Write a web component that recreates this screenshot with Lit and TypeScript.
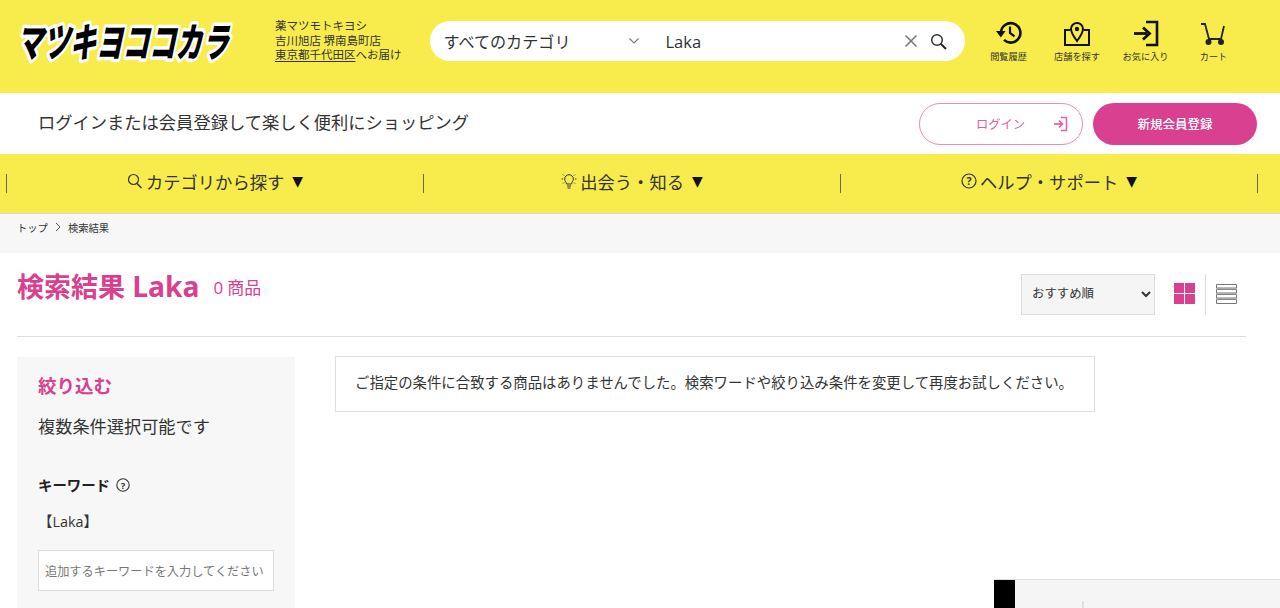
import { LitElement, html, css } from "lit";
import { customElement } from "lit/decorators.js";

@customElement("app-root")
export class AppRoot extends LitElement {
  static styles = css`
    :host {
      display: block;
      position: relative;
      width: 1280px;
      height: 608px;
      overflow: hidden;
      background: #fff;
      color: #333;
      font-family: "Noto Sans CJK JP", "Noto Sans", sans-serif;
    }
    svg { display: block; flex: none; }
    .latin { font-family: "Open Sans", "Noto Sans", "Noto Sans CJK JP", sans-serif; }

    .top {
      height: 93px;
      background: #f8ec4c;
      display: flex;
      align-items: flex-start;
      box-sizing: border-box;
      padding: 16px 0 0 16px;
    }
    .logo { width: 220px; height: 52px; overflow: visible; }
    .logo text {
      font-family: "Noto Sans CJK JP", sans-serif;
      font-weight: 900;
      font-size: 40px;
      fill: #000;
      stroke: #fff;
      stroke-width: 7px;
      stroke-linejoin: round;
      paint-order: stroke;
    }
    .addr {
      margin: 2px 0 0 39px;
      font-size: 11.5px;
      line-height: 14.5px;
      color: #333;
      white-space: nowrap;
    }
    .addr u { text-underline-offset: 2px; }
    .search {
      margin: 5px 0 0 28px;
      width: 535px;
      height: 40px;
      border-radius: 20px;
      background: #fff;
      display: flex;
      align-items: center;
      box-sizing: border-box;
      padding-left: 14px;
      font-size: 16px;
    }
    .cat { width: 222px; flex: none; display: flex; align-items: center; font-size: 16.1px; }
    .chev { margin-left: 58px; }
    .search .kw { flex: 1; color: #333; font-size: 16.5px; }
    .search .x { margin-right: 12px; }
    .search .s { margin-right: 18px; }
    .icons {
      margin: 2px 0 0 10px;
      display: grid;
      grid-template-columns: 68px 69px 68px 68px;
    }
    .ic {
      display: flex;
      flex-direction: column;
      align-items: center;
      font-size: 9.2px;
      line-height: 12px;
      color: #333;
      white-space: nowrap;
    }
    .ic svg { height: 28px; margin-top: 2px; margin-bottom: 2px; }

    .login {
      height: 61px;
      display: flex;
      align-items: center;
      box-sizing: border-box;
      padding: 0 23px 0 38px;
      font-size: 17.28px;
      color: #333;
    }
    .login .msg { flex: 1; white-space: nowrap; margin-top: -4px; }
    .btn {
      width: 164px;
      height: 42px;
      border-radius: 21px;
      box-sizing: border-box;
      display: flex;
      align-items: center;
      justify-content: center;
      position: relative;
      font-size: 12.3px;
    }
    .btn.out {
      border: 1px solid #ea8dbc;
      color: #e0609f;
      margin-right: 10px;
      padding-right: 1px;
    }
    .btn.out svg { position: absolute; right: 14px; top: 12px; }
    .btn.fill { background: #d9408f; color: #fff; font-size: 12.5px; font-weight: 500; }

    .nav {
      height: 60px;
      background: #f8ec4c;
      border-bottom: 1px solid #d8d8d8;
      box-sizing: border-box;
      padding: 19px 23px 0 6px;
      display: grid;
      grid-template-columns: repeat(3, 1fr);
    }
    .nav div {
      height: 19px;
      margin-top: 1px;
      border-left: 1px solid #666;
      display: flex;
      align-items: center;
      justify-content: center;
      gap: 3px;
      font-size: 17.3px;
      color: #333;
      white-space: nowrap;
    }
    .nav span.t { margin-top: -5px; }
    .nav svg { margin-top: -5px; }
    .nav div:last-child { border-right: 1px solid #666; margin-right: -1px; }
    .nav .tri { font-size: 14px; color: #111; margin-left: 5px; margin-top: -5px; font-family: "DejaVu Sans", sans-serif; }

    .crumb {
      height: 39px;
      background: #f7f7f7;
      display: flex;
      align-items: center;
      gap: 7px;
      padding: 0 0 13px 17px;
      box-sizing: border-box;
      font-size: 10.3px;
      color: #333;
    }

    .head {
      margin: 0 34px 0 17px;
      height: 84px;
      box-sizing: border-box;
      border-bottom: 1px solid #ddd;
      display: flex;
      align-items: flex-start;
      padding-top: 21px;
    }
    h1 {
      margin: -2px 0 0;
      font-size: 27px;
      line-height: 28px;
      font-weight: 700;
      color: #d9408f;
      white-space: nowrap;
    }
    h1 .latin { margin-left: 1px; font-size: 28.2px; }
    .count {
      flex: 1;
      margin-left: 14px;
      font-size: 17px;
      line-height: 28px;
      margin-top: -1px;
      color: #d9408f;
    }
    select {
      width: 134px;
      height: 41px;
      background: #f5f5f5;
      border: 1px solid #ddd;
      border-radius: 0;
      font-family: inherit;
      font-size: 12.4px;
      color: #333;
      padding: 0 0 3px 6px;
    }
    .grid-i { margin: 9px 0 0 19px; }
    .sep { width: 1px; height: 41px; margin-left: 10px; background: #ddd; }
    .list-i { margin: 10px 9px 0 10px; }

    .body {
      display: flex;
      align-items: flex-start;
      padding: 19px 0 0 17px;
      gap: 40px;
    }
    aside {
      width: 278px;
      height: 260px;
      margin-top: 1px;
      background: #f7f7f7;
      box-sizing: border-box;
      padding: 15px 21px;
    }
    .ttl { font-size: 18.5px; font-weight: 700; color: #d9408f; line-height: 27px; }
    .sub { font-size: 17.2px; line-height: 26px; margin-top: 14px; }
    .kwh {
      display: flex;
      align-items: center;
      gap: 6px;
      margin-top: 36px;
      font-size: 14.4px;
      font-weight: 700;
      color: #222;
      line-height: 20px;
    }
    .tag { font-size: 14.4px; line-height: 20px; margin-top: 16px; color: #333; }
    input {
      display: block;
      width: 236px;
      height: 41px;
      margin-top: 18px;
      box-sizing: border-box;
      border: 1px solid #ddd;
      border-radius: 0;
      background: #fff;
      padding: 0 6px;
      font-family: inherit;
      font-size: 12.2px;
    }
    input::placeholder { color: #777; opacity: 1; }
    .empty {
      width: 760px;
      height: 56px;
      box-sizing: border-box;
      border: 1px solid #ddd;
      display: flex;
      align-items: center;
      padding: 0 0 5px 19px;
      font-size: 14.4px;
      color: #333;
      white-space: nowrap;
    }

    .float {
      position: absolute;
      left: 994px;
      top: 579px;
      width: 286px;
      height: 40px;
      background: #f5f5f5;
      border-top: 1px solid #ddd;
      display: flex;
    }
    .float i { display: block; width: 21px; background: #000; }
    .float b { display: block; width: 2px; height: 30px; margin: 21px 0 0 67px; background: #e0e0e0; }
  `;

  render() {
    return html`
      <div class="top">
        <svg class="logo" viewBox="0 0 220 52">
          <text x="0" y="41" transform="skewX(-12) translate(9 0)" textLength="212" lengthAdjust="spacingAndGlyphs">マツキヨココカラ</text>
        </svg>
        <p class="addr">薬マツモトキヨシ<br />吉川旭店 堺南島町店<br /><u>東京都千代田区</u>へお届け</p>
        <div class="search">
          <div class="cat">
            <span>すべてのカテゴリ</span>
            <svg class="chev" width="12" height="8" viewBox="0 0 12 8"><path d="M1.5 1.5L6 6l4.500-4.500" fill="none" stroke="#777" stroke-width="1.100"/></svg>
          </div>
          <span class="kw latin">Laka</span>
          <svg class="x" width="14" height="14" viewBox="0 0 14 14"><path d="M1.500 1.500l11 11M12.500 1.500l-11 11" stroke="#777" stroke-width="1.500" fill="none"/></svg>
          <svg class="s" width="17" height="17" viewBox="0 0 17 17"><circle cx="7" cy="7" r="5.300" fill="none" stroke="#333" stroke-width="1.500"/><path d="M11 11l5 5" stroke="#222" stroke-width="2"/></svg>
        </div>
        <div class="icons">
          <div class="ic">
            <svg width="28" height="28" viewBox="0 0 28 28"><path d="M6 12.500a9.700 9.700 0 1 1 3 7.400" fill="none" stroke="#111" stroke-width="2.600"/><path d="M1 11h9.600l-4.800 6.400z" fill="#111"/><path d="M15 6.500V13l4.500 3.400" fill="none" stroke="#111" stroke-width="2.200"/></svg>
            閲覧履歴
          </div>
          <div class="ic">
            <svg width="28" height="28" viewBox="0 0 28 28"><path d="M7 10H2v15h24V10h-5" fill="none" stroke="#111" stroke-width="2"/><path d="M14 21c-3-4-6-8-6-12a6 6 0 0 1 12 0c0 4-3 8-6 12z" fill="#f8ec4c" stroke="#111" stroke-width="2"/><circle cx="14" cy="9" r="2.200" fill="#111"/></svg>
            店舗を探す
          </div>
          <div class="ic">
            <svg width="28" height="28" viewBox="0 0 28 28"><path d="M14 2h11v23H14" fill="none" stroke="#111" stroke-width="2.600"/><path d="M2 13.500h13" stroke="#111" stroke-width="2.800"/><path d="M11 7.500l6.500 6-6.500 6" fill="none" stroke="#111" stroke-width="2.800"/></svg>
            お気に入り
          </div>
          <div class="ic">
            <svg width="28" height="28" viewBox="0 0 28 28"><path d="M1 4h4l4 15h12l3-13" fill="none" stroke="#222" stroke-width="1.800"/><circle cx="8.500" cy="22" r="3" fill="#222"/><circle cx="21" cy="22" r="3" fill="#222"/></svg>
            カート
          </div>
        </div>
      </div>

      <div class="login">
        <span class="msg">ログインまたは会員登録して楽しく便利にショッピング</span>
        <div class="btn out">
          ログイン
          <svg width="15" height="16" viewBox="0 0 15 16"><path d="M8 1.500h5.500v13H8" fill="none" stroke="#e0609f" stroke-width="1.500"/><path d="M1 8h7.500" stroke="#e0609f" stroke-width="1.700"/><path d="M6 4.500L9.500 8 6 11.500" fill="none" stroke="#e0609f" stroke-width="1.700"/></svg>
        </div>
        <div class="btn fill">新規会員登録</div>
      </div>

      <nav class="nav">
        <div>
          <svg width="16" height="16" viewBox="0 0 16 16"><circle cx="6.500" cy="6.500" r="5" fill="none" stroke="#333" stroke-width="1.200"/><path d="M10 10.500l4.500 4.500" stroke="#333" stroke-width="1.500"/></svg>
          <span class="t">カテゴリから探す</span><span class="tri">▼</span>
        </div>
        <div>
          <svg width="16" height="16" viewBox="0 0 16 16"><path d="M5.500 11c0-2-1.800-2.500-1.800-5a4.300 4.300 0 0 1 8.600 0c0 2.500-1.800 3-1.800 5z" fill="none" stroke="#333"/><path d="M6 13h4M6.500 15h3M0.500 6h1.500M14 6h1.500M2 1.500l1 1M14 1.500l-1 1M2 10.500l1-1M14 10.500l-1-1" stroke="#333"/></svg>
          <span class="t">出会う・知る</span><span class="tri">▼</span>
        </div>
        <div>
          <svg width="16" height="16" viewBox="0 0 16 16"><circle cx="8" cy="8" r="7" fill="none" stroke="#333" stroke-width="1.200"/><text x="8" y="11.800" text-anchor="middle" font-size="10.500" font-weight="700" fill="#333" font-family="Noto Sans">?</text></svg>
          <span class="t">ヘルプ・サポート</span><span class="tri">▼</span>
        </div>
      </nav>

      <div class="crumb">
        <span>トップ</span>
        <svg width="6" height="10" viewBox="0 0 6 10"><path d="M1 1l4 4-4 4" fill="none" stroke="#555"/></svg>
        <span>検索結果</span>
      </div>

      <div class="head">
        <h1>検索結果 <span class="latin">Laka</span></h1>
        <span class="count"><span class="latin">0</span> 商品</span>
        <select><option>おすすめ順</option></select>
        <svg class="grid-i" width="21" height="21" viewBox="0 0 21 21"><path d="M0 0h10v10H0zM11 0h10v10H11zM0 11h10v10H0zM11 11h10v10H11z" fill="#d9408f"/></svg>
        <div class="sep"></div>
        <svg class="list-i" width="21" height="20" viewBox="0 0 21 20"><path d="M.5.500h20v3.500H.5zM.5 5.500h20V9H.5zM.5 10.500h20V14H.5zM.5 15.500h20v4H.5z" fill="#fff" stroke="#777"/><path d="M0 5h21M0 10h21M0 15h21" stroke="#999" stroke-width="1"/></svg>
      </div>

      <div class="body">
        <aside>
          <div class="ttl">絞り込む</div>
          <div class="sub">複数条件選択可能です</div>
          <div class="kwh">
            キーワード
            <svg width="14" height="14" viewBox="0 0 14 14"><circle cx="7" cy="7" r="6.200" fill="none" stroke="#333" stroke-width="1.100"/><text x="7" y="10.500" text-anchor="middle" font-size="9.500" font-weight="700" fill="#333" font-family="Noto Sans">?</text></svg>
          </div>
          <div class="tag">【<span class="latin">Laka</span>】</div>
          <input placeholder="追加するキーワードを入力してください" />
        </aside>
        <div class="empty">ご指定の条件に合致する商品はありませんでした。検索ワードや絞り込み条件を変更して再度お試しください。</div>
      </div>

      <div class="float"><i></i><b></b></div>
    `;
  }
}
